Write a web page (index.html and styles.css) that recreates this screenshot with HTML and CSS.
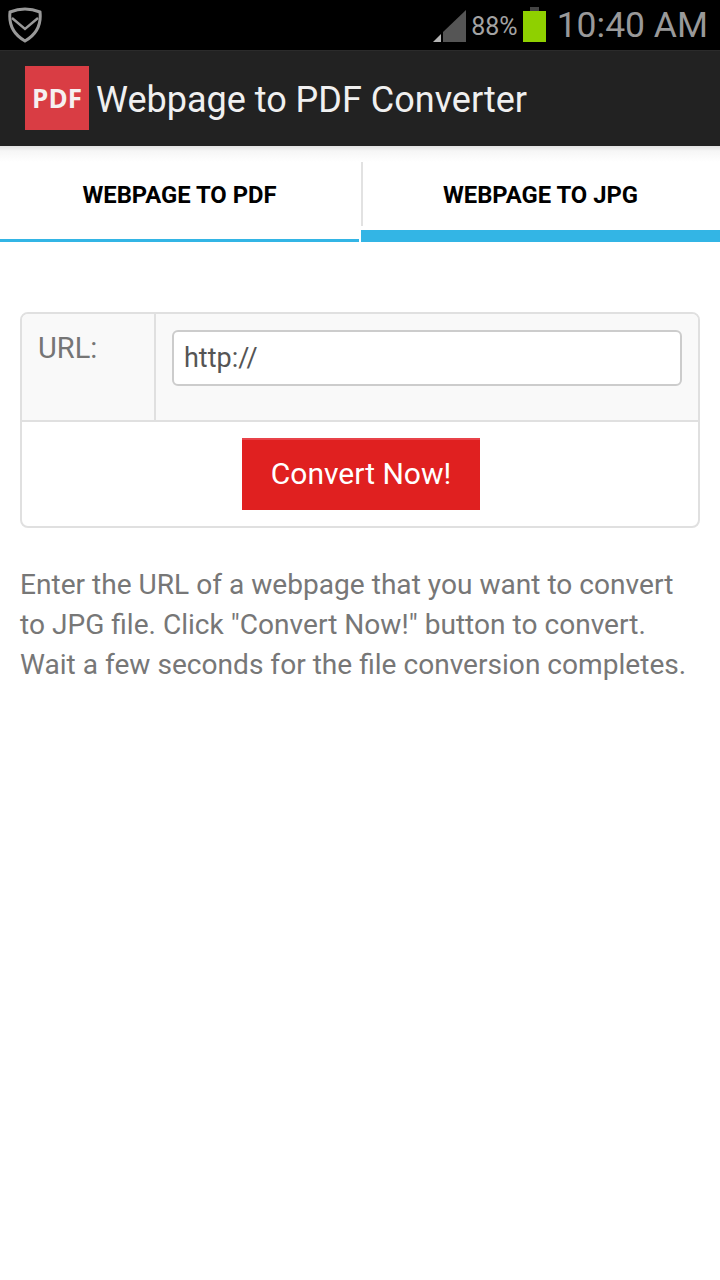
FILE: index.html
```html
<!DOCTYPE html>
<html>

<head>
    <title>Webpage to PDF Converter</title>
    <meta charset="utf-8">
    <link rel="stylesheet" href="styles.css">
</head>

<body>
    <div class="status-bar">
        <svg class="shield" width="34" height="36" viewBox="0 0 34 36">
            <path d="M17 2 C22 2 27 3 32 5 C33 14 31 26 17 34 C3 26 1 14 2 5 C7 3 12 2 17 2 Z" fill="none" stroke="#999" stroke-width="3"/>
            <path d="M4 11 L17 22 L30 11" fill="none" stroke="#999" stroke-width="2.4"/>
        </svg>
        <div class="status-right">
            <svg class="signal" width="33" height="32" viewBox="0 0 33 32">
                <path d="M0 32 L8 24 L8 32 Z" fill="#b5b5b5"/>
                <path d="M10 32 L10 22 L33 0 L33 32 Z" fill="#555"/>
            </svg>
            <span class="battery-text">88%</span>
            <div class="battery">
                <div class="battery-cap"></div>
                <div class="battery-body"></div>
            </div>
            <span class="clock">10:40 AM</span>
        </div>
    </div>

    <div class="action-bar">
        <div class="logo">PDF</div>
        <div class="app-title">Webpage to PDF Converter</div>
    </div>

    <div class="tabs">
        <div class="tab tab-off">WEBPAGE TO PDF</div>
        <div class="tab tab-on">WEBPAGE TO JPG</div>
    </div>

    <div class="content">
        <div class="form-card">
            <div class="url-row">
                <div class="url-label">URL:</div>
                <div class="url-cell">
                    <input class="url-input" type="text" value="http://">
                </div>
            </div>
            <div class="button-row">
                <button class="convert-btn">Convert Now!</button>
            </div>
        </div>
        <p class="help">Enter the URL of a webpage that you want to convert to JPG file. Click "Convert Now!" button to convert. Wait a few seconds for the file conversion completes.</p>
    </div>
</body>

</html>
```

FILE: styles.css
```css
html, body {
    margin: 0;
    padding: 0;
    background-color: #fff;
}

body {
    width: 720px;
    height: 1280px;
    overflow: hidden;
    font-family: Roboto, "Liberation Sans", sans-serif;
}

.status-bar {
    display: flex;
    justify-content: space-between;
    align-items: flex-start;
    height: 50px;
    box-sizing: border-box;
    padding: 7px 12px 0 8px;
    background-color: #000;
}

.status-right {
    display: flex;
    align-items: flex-start;
}

.signal {
    margin-top: 3px;
}

.battery-text {
    margin: 6px 5px 0 5px;
    font-size: 25px;
    line-height: 28px;
    color: #a3a3a3;
}

.battery {
    display: flex;
    flex-direction: column;
    align-items: center;
    width: 23px;
}

.battery-cap {
    width: 9px;
    height: 4px;
    background-color: #444;
}

.battery-body {
    width: 23px;
    height: 31px;
    background-color: #8fd000;
}

.clock {
    margin: 0 0 0 11px;
    font-size: 35.5px;
    line-height: 36px;
    color: #999;
}

.action-bar {
    display: flex;
    align-items: flex-start;
    height: 96px;
    box-sizing: border-box;
    padding: 15px 0 0 25px;
    border-top: 1px solid #2b2b2b;
    background-color: #222;
}

.logo {
    width: 64px;
    height: 64px;
    background-color: #d93d44;
    color: #f6f0f0;
    font-family: "Open Sans", sans-serif;
    font-weight: 700;
    font-size: 26px;
    line-height: 64px;
    text-align: center;
}

.app-title {
    margin: 2px 0 0 7px;
    font-size: 36px;
    line-height: 64px;
    color: #f0f0f0;
}

.tabs {
    display: flex;
    height: 96px;
    box-sizing: border-box;
    padding-top: 16px;
    background: linear-gradient(#e2e2e2 0, #f6f6f6 5px, #fff 16px);
}

.tab {
    box-sizing: border-box;
    height: 80px;
    font-size: 23.8px;
    font-weight: 700;
    color: #000;
    text-align: center;
    line-height: 66px;
}

.tab-off {
    width: 359px;
    border-bottom: 3px solid #33b5e5;
}

.tab-on {
    position: relative;
    width: 359px;
    margin-left: 2px;
    border-bottom: 12px solid #33b5e5;
}

/* divider between the two tabs */
.tab-on:before {
    content: "";
    position: absolute;
    left: 0;
    top: 0;
    width: 2px;
    height: 64px;
    background-color: #e2e2e2;
}

.content {
    padding: 70px 20px 0;
}

.form-card {
    box-sizing: border-box;
    width: 680px;
    height: 216px;
    border: 2px solid #e0e0e0;
    border-radius: 8px;
    overflow: hidden;
}

.url-row {
    display: flex;
    height: 108px;
    box-sizing: border-box;
    border-bottom: 2px solid #e0e0e0;
    background-color: #f9f9f9;
}

.url-label {
    box-sizing: border-box;
    width: 134px;
    padding: 16px 0 0 16px;
    border-right: 2px solid #e0e0e0;
    font-size: 29px;
    line-height: 36px;
    color: #757575;
}

.url-cell {
    padding: 16px 0 0 16px;
}

.url-input {
    display: block;
    box-sizing: border-box;
    width: 510px;
    height: 56px;
    padding: 0 10px;
    border: 2px solid #ccc;
    border-radius: 6px;
    outline: none;
    background-color: #fff;
    font-family: Roboto, "Liberation Sans", sans-serif;
    font-size: 27px;
    color: #555;
}

.button-row {
    display: flex;
    justify-content: center;
    padding: 16px 0 0 2px;
}

.convert-btn {
    width: 238px;
    height: 72px;
    padding: 0 0 4px;
    border: 0;
    border-top: 2px solid #e8434a;
    background-color: #e02020;
    color: #fff;
    font-family: Roboto, "Liberation Sans", sans-serif;
    font-size: 30px;
}

.help {
    margin: 37px 0 0;
    font-size: 28.1px;
    line-height: 40px;
    color: #777;
}
```
